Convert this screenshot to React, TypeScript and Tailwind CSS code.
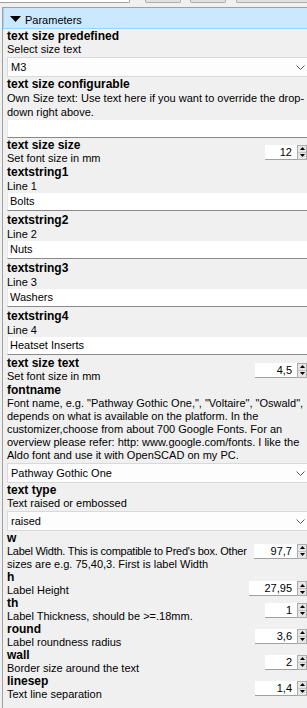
import React from 'react'

const Label = ({ children, h = 'h-[14px] leading-[14px]' }: { children: React.ReactNode; h?: string }) => (
  <div className={`${h} text-[12px] font-bold whitespace-nowrap`}>{children}</div>
)

const Desc = ({ children, h = 'h-[14px] leading-[14px]' }: { children: React.ReactNode; h?: string }) => (
  <div className={`${h} whitespace-nowrap`}>{children}</div>
)

const Combo = ({ value, className = '' }: { value: string; className?: string }) => (
  <div className={`h-[20px] -mr-[8px] flex items-center justify-between bg-[#fdfdfd] border border-[#d9d9d9] pl-[3px] pr-[9px] ${className}`}>
    <span className="leading-[18px]">{value}</span>
    <svg width="9" height="5" viewBox="0 0 9 5" className="mt-[1px]">
      <polyline points="0.5,0.5 4.5,4.5 8.5,0.5" fill="none" stroke="#606060" strokeWidth="1" />
    </svg>
  </div>
)

const TextInput = ({ value }: { value: string }) => (
  <div className="h-[18px] -mr-[8px] bg-white border-l border-[#e6e6e6] border-b border-b-[#8a8a8a] pl-[2px] leading-[17px]">
    {value}
  </div>
)

const Spin = ({ value, w, className = '' }: { value: string; w: string; className?: string }) => (
  <div className={`flex shrink-0 ${className}`}>
    <div className={`${w} h-[15px] bg-white border-b border-[#a0a0a0] text-right pr-[5px] leading-[14px]`}>{value}</div>
    <div className="w-[10px] h-[15px] flex flex-col border border-[#adadad] bg-[#e6e6e6]">
      <div className="flex-1 flex items-center justify-center border-b border-[#c4c4c4]">
        <svg width="5" height="3" viewBox="0 0 5 3"><polygon points="2.5,0 5,3 0,3" fill="#000" /></svg>
      </div>
      <div className="flex-1 flex items-center justify-center">
        <svg width="5" height="3" viewBox="0 0 5 3"><polygon points="0,0 5,0 2.5,3" fill="#000" /></svg>
      </div>
    </div>
  </div>
)

const SpinRow = ({
  label,
  desc,
  value,
  w,
  spinClass = '',
}: {
  label: string
  desc: string[]
  value: string
  w: string
  spinClass?: string
}) => (
  <div className="flex items-center justify-between">
    <div className="flex flex-col">
      <Label h="h-[13px] leading-[13px]">{label}</Label>
      {desc.map((d) => (
        <Desc key={d} h="h-[13px] leading-[13px]">{d}</Desc>
      ))}
    </div>
    <Spin value={value} w={w} className={spinClass} />
  </div>
)

const StringRow = ({ label, desc, value }: { label: string; desc: string; value: string }) => (
  <div className="flex flex-col pb-[2px]">
    <Label>{label}</Label>
    <Desc>{desc}</Desc>
    <TextInput value={value} />
  </div>
)

export default function App() {
  return (
    <div className="w-[307px] h-[708px] overflow-hidden bg-[#f0f0f0] text-[11px] text-black font-['Liberation_Sans',Arial,sans-serif]">
      {/* bottoms of the toolbar widgets above */}
      <div className="h-[7px] flex items-start">
        <div className="w-[130px] h-[3px] bg-white border-b border-r border-[#a0a0a0] rounded-br-[2px]" />
        <div className="w-[36px] h-[3px] ml-[15px] bg-[#e1e1e1] border-b border-x border-[#adadad] rounded-b-[2px]" />
        <div className="w-[36px] h-[3px] ml-[9px] bg-[#e1e1e1] border-b border-x border-[#adadad] rounded-b-[2px]" />
        <div className="flex-1 h-[3px] ml-[10px] bg-[#e1e1e1] border-b border-l border-[#adadad] rounded-bl-[2px]" />
      </div>

      <div className="ml-[2px] h-[701px] border-l border-t border-[#a0a0a0]">
        {/* group header */}
        <div className="h-[21px] flex items-center bg-[#cce8ff] border-b border-l border-[#99d1ff] pl-[6px]">
          <svg width="11" height="6" viewBox="0 0 11 6" className="mt-[1px]">
            <polygon points="0,0 11,0 5.5,6" fill="#000" />
          </svg>
          <span className="ml-[4px] mt-[3px] leading-[14px]">Parameters</span>
        </div>

        <div className="pl-[4px] flex flex-col">
          <Label>text size predefined</Label>
          <Desc h="h-[13px] leading-[13px]">Select size text</Desc>
          <Combo value="M3" className="mt-[1px]" />

          <Label>text size configurable</Label>
          <Desc>Own Size text: Use text here if you want to override the drop-</Desc>
          <Desc>down right above.</Desc>
          <div className="mt-[1px] mb-[1px]">
            <TextInput value="" />
          </div>

          <SpinRow label="text size size" desc={['Set font size in mm']} value="12" w="w-[32px]" />

          <StringRow label="textstring1" desc="Line 1" value="Bolts" />
          <StringRow label="textstring2" desc="Line 2" value="Nuts" />
          <StringRow label="textstring3" desc="Line 3" value="Washers" />
          <StringRow label="textstring4" desc="Line 4" value="Heatset Inserts" />

          <SpinRow label="text size text" desc={['Set font size in mm']} value="4,5" w="w-[42px]" />

          <Label>fontname</Label>
          <Desc h="h-[13px] leading-[13px]">Font name, e.g. "Pathway Gothic One,", "Voltaire", "Oswald",</Desc>
          <Desc h="h-[13px] leading-[13px]">depends on what is available on the platform. In the</Desc>
          <Desc h="h-[13px] leading-[13px]">customizer,choose from about 700 Google Fonts. For an</Desc>
          <Desc h="h-[13px] leading-[13px]">overview please refer: http: www.google.com/fonts. I like the</Desc>
          <Desc h="h-[13px] leading-[13px]">Aldo font and use it with OpenSCAD on my PC.</Desc>
          <Combo value="Pathway Gothic One" className="mt-[1px]" />

          <Label>text type</Label>
          <Desc h="h-[13px] leading-[13px]">Text raised or embossed</Desc>
          <Combo value="raised" className="mt-[1px]" />

          <div className="flex items-center justify-between">
            <div className="flex flex-col min-w-0">
              <Label>w</Label>
              <Desc h="h-[13px] leading-[13px] tracking-[-0.25px]">Label Width. This is compatible to Pred's box. Other</Desc>
              <Desc h="h-[13px] leading-[13px]">sizes are e.g. 75,40,3. First is label Width</Desc>
            </div>
            <Spin value="97,7" w="w-[43px]" className="ml-[4px]" />
          </div>

          <SpinRow label="h" desc={['Label Height']} value="27,95" w="w-[48px]" spinClass="self-end mb-[1px]" />
          <SpinRow label="th" desc={['Label Thickness, should be >=.18mm.']} value="1" w="w-[32px]" />
          <SpinRow label="round" desc={['Label roundness radius']} value="3,6" w="w-[42px]" />
          <SpinRow label="wall" desc={['Border size around the text']} value="2" w="w-[32px]" />
          <SpinRow label="linesep" desc={['Text line separation']} value="1,4" w="w-[42px]" />
        </div>
      </div>
    </div>
  )
}
